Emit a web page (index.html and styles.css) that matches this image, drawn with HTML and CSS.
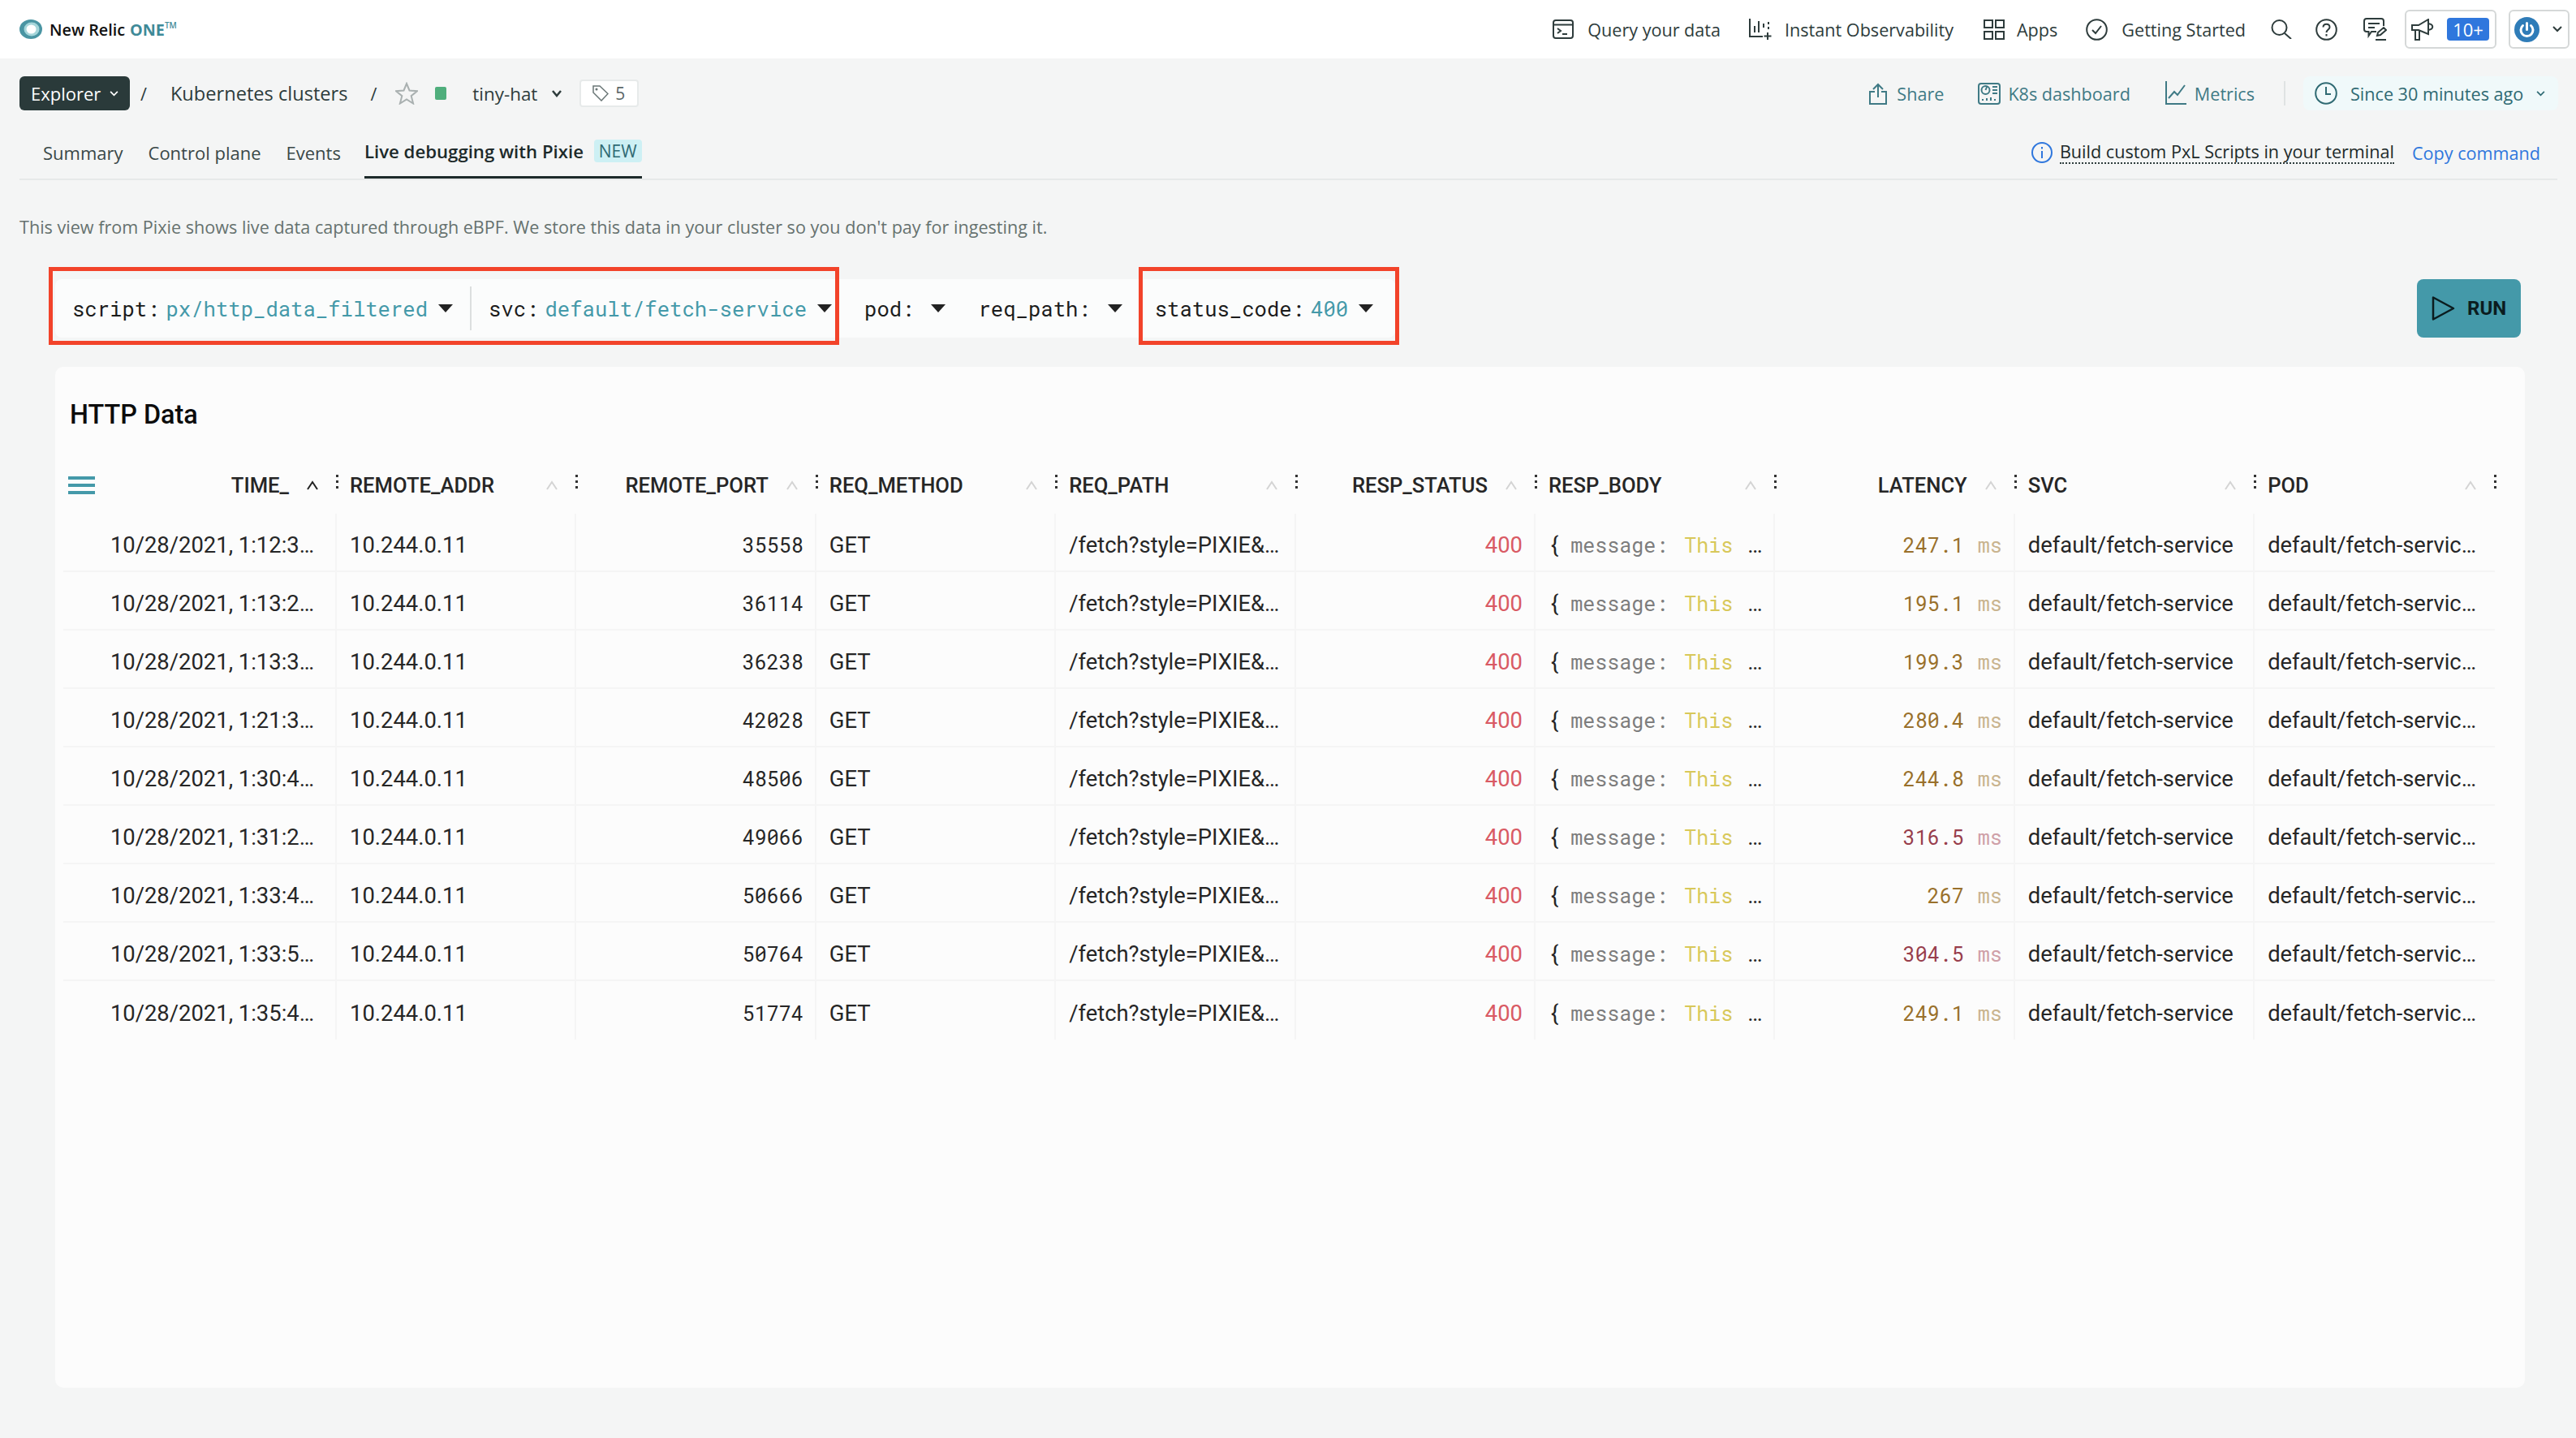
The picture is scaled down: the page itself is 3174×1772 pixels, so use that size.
FILE: index.html
```html
<!DOCTYPE html>
<html lang="en">
  <head>
    <meta charset="utf-8">
    <title>New Relic ONE - Live debugging with Pixie</title>
    <link rel="stylesheet" href="styles.css">
  </head>
  <body>
    <header class="topbar">
      <div class="logo">
        <svg class="logo-mark" width="28" height="24" viewBox="0 0 28 24"><ellipse cx="14" cy="12" rx="14" ry="12" fill="#4a95a3"/><ellipse cx="15" cy="12" rx="9.5" ry="8.5" fill="#a5d6da"/><ellipse cx="14.5" cy="12" rx="6" ry="5.5" fill="#fff"/></svg>
        <span class="logo-name">New Relic</span> <span class="logo-one">ONE</span><span class="logo-tm">TM</span>
      </div>
      <nav class="topnav">
        <a class="topnav-item item-query">
          <svg width="26" height="24" viewBox="0 0 26 24" fill="none" stroke="#2e3c3c" stroke-width="2"><rect x="1" y="1" width="24" height="22" rx="3"/><path d="M1 6.5h24M6 11l4 3-4 3M12 18h6"/></svg>
          Query your data
        </a>
        <a class="topnav-item item-instant">
          <svg width="29" height="27" viewBox="0 0 29 27" fill="none" stroke="#2e3c3c" stroke-width="2"><path d="M1 0v22h16M7 9v8M12 3v14M18 6v5M24 4v3M24 10v3M23 17v9M18.500 21.500h9"/></svg>
          Instant Observability
        </a>
        <a class="topnav-item item-apps">
          <svg width="26" height="25" viewBox="0 0 26 25" fill="none" stroke="#2e3c3c" stroke-width="2"><rect x="1" y="1" width="10" height="9"/><rect x="15" y="1" width="10" height="9"/><rect x="1" y="15" width="10" height="9"/><rect x="15" y="15" width="10" height="9"/></svg>
          Apps
        </a>
        <a class="topnav-item">
          <svg width="27" height="27" viewBox="0 0 27 27" fill="none" stroke="#2e3c3c" stroke-width="2"><circle cx="13.500" cy="13.500" r="12.300"/><path d="M8 14l4 4 7-9"/></svg>
          Getting Started
        </a>
        <svg class="topnav-icon icon-search" width="26" height="24" viewBox="0 0 26 24" fill="none" stroke="#2e3c3c" stroke-width="2"><circle cx="10.500" cy="10" r="9"/><path d="M17 17l8 7"/></svg>
        <svg class="topnav-icon icon-help" width="27" height="27" viewBox="0 0 27 27" fill="none" stroke="#2e3c3c" stroke-width="2"><circle cx="13.500" cy="13.500" r="12.300"/><path d="M9.500 10.500c0-5 8-5 8 0 0 3-4 3-4 6.500M13.500 19v2.500"/></svg>
        <svg class="topnav-icon icon-feedback" width="29" height="28" viewBox="0 0 29 28" fill="none" stroke="#2e3c3c" stroke-width="2"><path d="M16 17h-6l-3.500 5v-5H4a3 3 0 0 1-3-3V4a3 3 0 0 1 3-3h18a3 3 0 0 1 3 3v6M6 7h14M6 12h8M17 22l1-4 7-6 3 3-7 6zM15 27h13"/></svg>
        <div class="iconbox box-notify">
          <svg width="29" height="27" viewBox="0 0 29 27" fill="none" stroke="#2e3c3c" stroke-width="2"><path d="M1 8h8l12-7v18L9 14H1zM5 14v12h5V15M21 6c7 1 7 7 0 8"/></svg>
          <span class="count">10+</span>
        </div>
        <div class="iconbox box-profile">
          <svg width="31" height="31" viewBox="0 0 31 31"><circle cx="15.500" cy="15.500" r="15.500" fill="#2f7cb8"/><path d="M15.500 7.500v8M10.500 10.500a7.500 7.500 0 1 0 10 0" fill="none" stroke="#fff" stroke-width="3" stroke-linecap="round"/></svg>
          <svg class="chev" width="12" height="8" viewBox="0 0 12 8" fill="none" stroke="#2e3c3c" stroke-width="2"><path d="M1 1l5 5 5-5"/></svg>
        </div>
      </nav>
    </header>

    <div class="toolbar">
      <button class="explorer">Explorer <svg width="11" height="7" viewBox="0 0 12 8" fill="none" stroke="#fff" stroke-width="2"><path d="M1 1l5 5 5-5"/></svg></button>
      <span class="crumb-sep">/</span>
      <span class="crumb">Kubernetes clusters</span>
      <span class="crumb-sep sep-2">/</span>
      <svg class="star" width="28" height="28" viewBox="0 0 28 28" fill="none" stroke="#a9b0b0" stroke-width="2"><path d="M14 2l3.500 8.500 9.500.7-7.300 6 2.400 9.300-8.100-5-8.100 5 2.400-9.300-7.300-6 9.500-.7z"/></svg>
      <span class="health"></span>
      <span class="entity">tiny-hat</span>
      <svg class="entity-chev" width="12" height="9" viewBox="0 0 12 9" fill="none" stroke="#2e3c3c" stroke-width="2.500"><path d="M1 1l5 6 5-6"/></svg>
      <div class="tag">
        <svg width="20" height="20" viewBox="0 0 20 20" fill="none" stroke="#6a7676" stroke-width="1.500"><path d="M1 1h8l10 9.500-8 8.500L1 9z"/><circle cx="5" cy="5" r=".8"/></svg>
        5
      </div>
      <div class="actions">
        <a class="action">
          <svg width="22" height="27" viewBox="0 0 22 27" fill="none" stroke="#3f7a85" stroke-width="2"><path d="M11 18V2M5 8l6-6 6 6M7 11H1v15h20V11h-6"/></svg>
          Share
        </a>
        <a class="action act-k8s">
          <svg width="28" height="27" viewBox="0 0 28 27" fill="none" stroke="#3f7a85" stroke-width="2"><rect x="1" y="1" width="26" height="25" rx="3"/><circle cx="9.500" cy="9" r="5"/><path d="M9.500 9l2-5M18 5h6M18 9h6M18 13h6M6 22v-2M11 22v-3M16 22v-4M21 22v-2"/></svg>
          K8s dashboard
        </a>
        <a class="action act-metrics">
          <svg width="26" height="30" viewBox="0 0 26 30" fill="none" stroke="#3f7a85" stroke-width="2"><path d="M1 0v28h25M4 21l7-8 4 4 9-12"/></svg>
          Metrics
        </a>
        <span class="actions-sep"></span>
        <div class="timepicker">
          <svg width="28" height="28" viewBox="0 0 28 28" fill="none" stroke="#2f6a73" stroke-width="2"><circle cx="14" cy="14" r="12.800"/><path d="M14 6v9h6"/></svg>
          <span>Since 30 minutes ago</span>
          <svg class="time-chev" width="11" height="7" viewBox="0 0 12 8" fill="none" stroke="#2f6a73" stroke-width="2"><path d="M1 1l5 5 5-5"/></svg>
        </div>
      </div>
    </div>

    <div class="tabs">
      <a class="tab">Summary</a>
      <a class="tab">Control plane</a>
      <a class="tab">Events</a>
      <a class="tab active">Live debugging with Pixie <span class="new">NEW</span></a>
      <div class="tabs-right">
        <svg width="26" height="28" viewBox="0 0 26 28" fill="none" stroke="#2f77dd" stroke-width="2"><circle cx="13" cy="14" r="12"/><path d="M13 12v9M13 7v2.500"/></svg>
        <a class="hint">Build custom PxL Scripts in your terminal</a>
        <a class="copy">Copy command</a>
      </div>
    </div>

    <p class="desc">This view from Pixie shows live data captured through eBPF. We store this data in your cluster so you don't pay for ingesting it.</p>

    <div class="scriptrow">
      <div class="vars">
        <div class="var var-first"><span>script:</span><span class="val">px/http_data_filtered</span><i class="caret"></i></div>
        <div class="var"><span>svc:</span><span class="val">default/fetch-service</span><i class="caret"></i></div>
        <div class="var"><span>pod:</span><i class="caret"></i></div>
        <div class="var"><span>req_path:</span><i class="caret"></i></div>
        <div class="var"><span>status_code:</span><span class="val">400</span><i class="caret"></i></div>
      </div>
      <button class="run">
        <svg width="29" height="32" viewBox="0 0 29 32" fill="none" stroke="#0b1c1f" stroke-width="2.500" stroke-linejoin="round"><path d="M2 2.500v27L27 16z"/></svg>
        RUN
      </button>
      <span class="mark mark-a"></span>
      <span class="mark mark-b"></span>
    </div>

    <section class="card">
      <h2 class="card-title">HTTP Data</h2>
      <div class="grid head">
        <div class="th right first"><span class="burger"></span><span class="th-label">TIME_</span><svg class="sort on" width="16" height="12" viewBox="0 0 16 12" fill="none" stroke-width="2"><path d="M2 11l6-9 6 9"/></svg><i class="dots"></i></div>
        <div class="th"><span class="th-label">REMOTE_ADDR</span><svg class="sort" width="16" height="12" viewBox="0 0 16 12" fill="none" stroke-width="2"><path d="M2 11l6-9 6 9"/></svg><i class="dots"></i></div>
        <div class="th right"><span class="th-label">REMOTE_PORT</span><svg class="sort" width="16" height="12" viewBox="0 0 16 12" fill="none" stroke-width="2"><path d="M2 11l6-9 6 9"/></svg><i class="dots"></i></div>
        <div class="th"><span class="th-label">REQ_METHOD</span><svg class="sort" width="16" height="12" viewBox="0 0 16 12" fill="none" stroke-width="2"><path d="M2 11l6-9 6 9"/></svg><i class="dots"></i></div>
        <div class="th"><span class="th-label">REQ_PATH</span><svg class="sort" width="16" height="12" viewBox="0 0 16 12" fill="none" stroke-width="2"><path d="M2 11l6-9 6 9"/></svg><i class="dots"></i></div>
        <div class="th right"><span class="th-label">RESP_STATUS</span><svg class="sort" width="16" height="12" viewBox="0 0 16 12" fill="none" stroke-width="2"><path d="M2 11l6-9 6 9"/></svg><i class="dots"></i></div>
        <div class="th"><span class="th-label">RESP_BODY</span><svg class="sort" width="16" height="12" viewBox="0 0 16 12" fill="none" stroke-width="2"><path d="M2 11l6-9 6 9"/></svg><i class="dots"></i></div>
        <div class="th right"><span class="th-label">LATENCY</span><svg class="sort" width="16" height="12" viewBox="0 0 16 12" fill="none" stroke-width="2"><path d="M2 11l6-9 6 9"/></svg><i class="dots"></i></div>
        <div class="th"><span class="th-label">SVC</span><svg class="sort" width="16" height="12" viewBox="0 0 16 12" fill="none" stroke-width="2"><path d="M2 11l6-9 6 9"/></svg><i class="dots"></i></div>
        <div class="th"><span class="th-label">POD</span><svg class="sort" width="16" height="12" viewBox="0 0 16 12" fill="none" stroke-width="2"><path d="M2 11l6-9 6 9"/></svg><i class="dots"></i></div>
      </div>
      <div id="rows"></div>
    </section>

    <script>
      var data = [
        ['1:12:3', '35558', '247.1', ''],
        ['1:13:2', '36114', '195.1', ''],
        ['1:13:3', '36238', '199.3', ''],
        ['1:21:3', '42028', '280.4', ''],
        ['1:30:4', '48506', '244.8', ''],
        ['1:31:2', '49066', '316.5', 'slow'],
        ['1:33:4', '50666', '267', ''],
        ['1:33:5', '50764', '304.5', 'slow'],
        ['1:35:4', '51774', '249.1', '']
      ];
      var rowsHtml = '';
      for (var i = 0; i < data.length; i++) {
        rowsHtml += '<div class="grid row">'
          + '<div class="td time">10/28/2021, ' + data[i][0] + '…</div>'
          + '<div class="td">10.244.0.11</div>'
          + '<div class="td num mono">' + data[i][1] + '</div>'
          + '<div class="td">GET</div>'
          + '<div class="td">/fetch?style=PIXIE&amp;…</div>'
          + '<div class="td num status">400</div>'
          + '<div class="td body"><span class="brace">{</span><span class="mono key">message:</span><span class="mono str">This</span><span class="more">…</span></div>'
          + '<div class="td num mono lat ' + data[i][3] + '">' + data[i][2] + '<span class="unit">ms</span></div>'
          + '<div class="td">default/fetch-service</div>'
          + '<div class="td">default/fetch-servic…</div>'
          + '</div>';
      }
      document.getElementById('rows').innerHTML = rowsHtml;
    </script>
  </body>
</html>
```
FILE: styles.css
```css
*{
  box-sizing: border-box;
}
body{
  margin: 0;
  min-height: 100vh;
  background: #f4f5f5;
  font-family: "Open Sans", sans-serif;
  font-size: 21.6px;
  color: #2e3c3c;
}
a{
  color: inherit;
  text-decoration: none;
}
svg{
  display: block;
  flex: none;
}

/* top bar */
.topbar{
  height: 72px;
  background: #fff;
  display: flex;
  align-items: center;
  padding: 0 8px 0 24px;
}
.logo{
  display: flex;
  align-items: center;
  font-size: 19.8px;
  font-weight: 600;
  white-space: pre;
}
.logo-mark{
  margin-right: 9px;
}
.logo-name{
  color: #111;
}
.logo-one{
  color: #3f8a98;
  font-weight: 700;
  margin-left: 6px;
}
.logo-tm{
  color: #3f8a98;
  font-size: 10px;
  margin-top: -10px;
}
.topnav{
  margin-left: auto;
  display: flex;
  align-items: center;
}
.topnav-item{
  display: flex;
  align-items: center;
  gap: 17px;
  margin-right: 37px;
}
.item-query, .item-apps{
  margin-right: 35px;
}
.item-instant, .item-apps{
  gap: 15px;
}
.topnav-icon{
  margin-right: 31px;
}
.icon-search{
  margin-left: -6px;
  margin-right: 29px;
}
.icon-help{
  margin-right: 32px;
}
.icon-feedback{
  margin-right: 22px;
}
.iconbox{
  height: 48px;
  border: 2px solid #d5d8d8;
  border-radius: 6px;
  display: flex;
  align-items: center;
}
.box-notify{
  width: 113px;
  padding-left: 6px;
  margin-right: 15px;
}
.count{
  margin-left: 15px;
  width: 52px;
  height: 28px;
  background: #2f77dd;
  border-radius: 4px;
  color: #fff;
  font-size: 22px;
  line-height: 28px;
  text-align: center;
}
.box-profile{
  width: 75px;
  padding-left: 5px;
}
.chev{
  margin-left: 16px;
}

/* breadcrumbs and actions */
.toolbar{
  height: 42px;
  margin-top: 22px;
  padding: 0 22px 0 24px;
  display: flex;
  align-items: center;
}
.explorer{
  width: 136px;
  height: 42px;
  background: #2a3a3a;
  border: 0;
  border-radius: 6px;
  color: #fff;
  font: 22px "Open Sans", sans-serif;
  display: flex;
  align-items: center;
  gap: 11px;
  padding: 0 0 0 14px;
}
.crumb-sep{
  margin-left: 13px;
}
.crumb{
  margin-left: 29px;
  font-size: 23.6px;
}
.sep-2{
  margin-left: 28px;
}
.star{
  margin-left: 23px;
}
.health{
  width: 14px;
  height: 16px;
  background: #4fae7c;
  border-radius: 2px;
  margin-left: 21px;
}
.entity{
  margin-left: 32px;
  font-size: 22.4px;
}
.entity-chev{
  margin-left: 18px;
}
.tag{
  width: 73px;
  height: 34px;
  margin-left: 22px;
  background: #fff;
  border: 2px solid #e7eaea;
  border-radius: 4px;
  display: flex;
  align-items: center;
  gap: 8px;
  padding-left: 14px;
  color: #5c6868;
  font-size: 21px;
}
.actions{
  margin-left: auto;
  display: flex;
  align-items: center;
  color: #3f7a85;
}
.action{
  display: flex;
  align-items: center;
  gap: 12px;
}
.act-k8s{
  margin-left: 42px;
  gap: 9px;
}
.act-metrics{
  margin-left: 43px;
  gap: 10px;
}
.actions-sep{
  width: 2px;
  height: 30px;
  background: #dfe3e3;
  margin: 0 22px 0 36px;
}
.timepicker{
  width: 314px;
  height: 42px;
  background: #f0f9fa;
  border-radius: 8px;
  display: flex;
  align-items: center;
  padding-left: 14px;
  color: #2f6a73;
}
.timepicker span{
  margin-left: 16px;
}
.time-chev{
  margin-left: 16px;
}

/* tabs */
.tabs{
  height: 64px;
  margin: 22px 23px 0 24px;
  padding-left: 27px;
  border-bottom: 2px solid #e6e9e9;
  display: flex;
  align-items: stretch;
  gap: 27px;
}
.tab{
  display: flex;
  align-items: center;
  padding: 0 2px 2px;
  color: #3a4848;
  font-size: 22px;
}
.tab.active{
  color: #1d2a2a;
  font-weight: 600;
  padding: 0 0 3px 0;
  border-bottom: 3px solid #1d2a2a;
  height: 62px;
  white-space: pre;
  font-size: 22.2px;
}
.new{
  margin-left: 7px;
  padding: 0 6px;
  height: 28px;
  line-height: 28px;
  background: #cdf0f4;
  border-radius: 4px;
  color: #2f6a73;
  font-weight: 400;
  font-size: 21px;
}
.tabs-right{
  margin-left: auto;
  display: flex;
  align-items: center;
  padding-right: 21px;
  padding-bottom: 2px;
}
.hint{
  margin-left: 9px;
  border-bottom: 2px dotted #2e3c3c;
  line-height: 26px;
  color: #1d2a2a;
}
.copy{
  margin-left: 22px;
  margin-top: 1px;
  color: #2f77dd;
}

.desc{
  margin: 43px 0 0 24px;
  line-height: 30px;
  color: #66726f;
}

/* script variables */
.scriptrow{
  position: relative;
  margin: 49px 68px 36px;
  height: 72px;
  display: flex;
  justify-content: space-between;
}
.vars{
  background: #fbfcfc;
  border-radius: 8px;
  display: flex;
  align-items: center;
  font-family: "Roboto Mono", "DejaVu Sans Mono", "Liberation Mono", monospace;
  font-size: 25.6px;
  color: #1c1c1c;
}
.var{
  display: flex;
  align-items: center;
  padding: 0 19px 0 21px;
}
.var-first{
  border-right: 2px solid #dcdfdf;
  height: 54px;
  padding-right: 21px;
}
.var:last-child{
  padding-right: 27px;
}
.val{
  color: #4499a9;
  margin-left: 8px;
}
.caret{
  width: 0;
  height: 0;
  margin-left: 13px;
  border-left: 9px solid transparent;
  border-right: 9px solid transparent;
  border-top: 10px solid #222;
}
.var span:first-child + .caret{
  margin-left: 21px;
}
.run{
  width: 128px;
  height: 72px;
  background: #4499a9;
  border: 0;
  border-radius: 8px;
  color: #0b1c1f;
  font: 700 24px Roboto, sans-serif;
  display: flex;
  align-items: center;
  gap: 15px;
  padding: 0 0 0 18px;
}
/* red annotation rectangles on the screenshot */
.mark{
  position: absolute;
  top: -15px;
  height: 96px;
  border: 5px solid #f2432a;
}
.mark-a{
  left: -8px;
  width: 974px;
}
.mark-b{
  left: 1335px;
  width: 321px;
}

/* table card */
.card{
  margin: 0 63px 0 68px;
  height: 1258px;
  background: #fcfcfc;
  border-radius: 10px;
  padding: 39px 0 0 10px;
  font-family: Roboto, sans-serif;
  font-size: 27.4px;
  color: #262626;
}
.card-title{
  margin: 0 0 29px 8px;
  font-size: 32.4px;
  line-height: 40px;
  font-weight: 500;
  color: #0c0c0c;
}
.grid{
  display: grid;
  width: 2996px;
  grid-template-columns: 337px repeat(9, 295.4px);
}
.head{
  height: 73px;
}
.th{
  position: relative;
  display: flex;
  align-items: center;
  padding: 3px 22px 0 16px;
  font-size: 25.6px;
  font-weight: 500;
}
.th-label{
  flex: 1;
}
.right .th-label{
  text-align: right;
  padding-right: 21px;
}
.sort{
  stroke: #d4d4d4;
}
.sort.on{
  stroke: #222;
}
.dots{
  position: absolute;
  right: -2px;
  top: 25px;
  width: 3px;
  height: 18px;
  background: radial-gradient(circle at 1.5px 1.5px, #333 1.5px, transparent 1.7px) 0 0 / 3px 7px;
}
.burger{
  width: 33px;
  height: 22px;
  margin-left: -10px;
  flex: none;
  background: linear-gradient(#4499a9 4px, transparent 4px) 0 0 / 100% 9px;
}
.row{
  height: 72px;
  border-bottom: 2px solid #f5f5f5;
}
#rows .row:last-child{
  border-bottom: 0;
}
.td{
  display: flex;
  align-items: center;
  padding: 7px 16px 0;
  border-right: 2px solid #f5f5f5;
  white-space: pre;
  overflow: hidden;
}
.row .td:last-child{
  border-right: 0;
}
.time{
  justify-content: flex-end;
  padding-right: 26px;
}
.num{
  justify-content: flex-end;
  padding-right: 14px;
}
.mono{
  font-family: "Roboto Mono", "DejaVu Sans Mono", monospace;
  font-size: 25px;
}
.status{
  color: #d95a64;
}
.brace{
  margin-left: 3px;
}
.key{
  color: #7d7d7d;
  margin-left: 15px;
}
.str{
  color: #d8c85a;
  margin-left: 20px;
}
.more{
  margin-left: 18px;
}
.lat{
  color: #99702b;
}
.unit{
  color: #c9b48f;
  margin-left: 17px;
}
.lat.slow{
  color: #983e4c;
}
.lat.slow .unit{
  color: #cfa0a8;
}
```
